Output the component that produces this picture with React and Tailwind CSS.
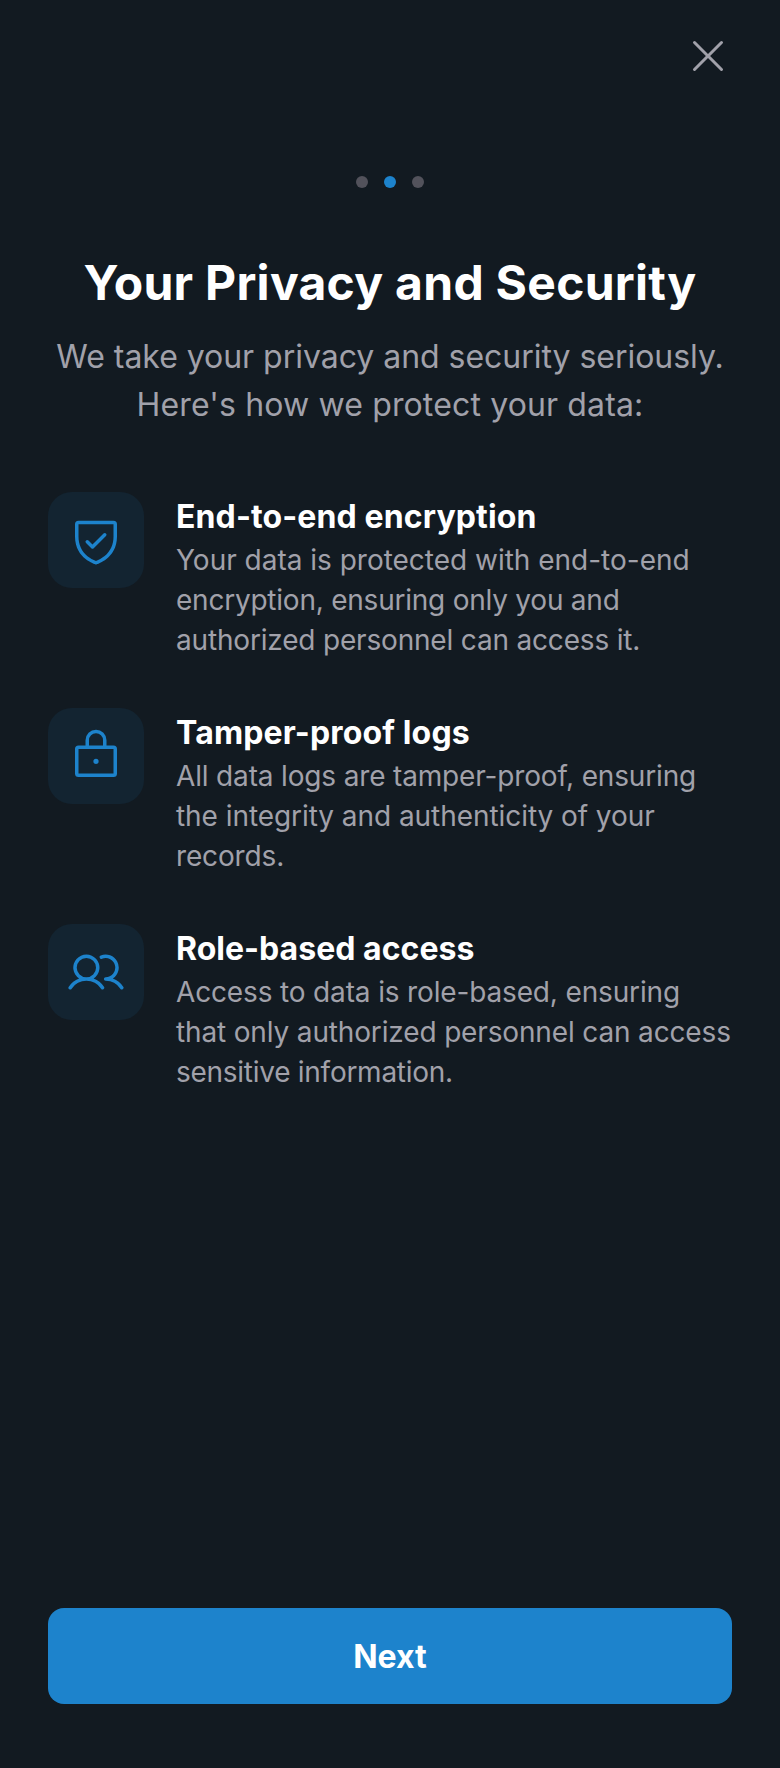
import React from 'react';
import { PiShieldCheck, PiLock, PiUsers, PiX } from 'react-icons/pi';

const items = [
  {
    Icon: PiShieldCheck,
    title: 'End-to-end encryption',
    tracking: 'tracking-[0.12px]',
    lines: [
      { text: 'Your data is protected with end-to-end', tracking: 'tracking-[-0.01px]' },
      { text: 'encryption, ensuring only you and', tracking: 'tracking-[-0.23px]' },
      { text: 'authorized personnel can access it.', tracking: 'tracking-[-0.18px]' },
    ],
  },
  {
    Icon: PiLock,
    title: 'Tamper-proof logs',
    tracking: 'tracking-[0.15px]',
    lines: [
      { text: 'All data logs are tamper-proof, ensuring', tracking: 'tracking-[-0.16px]' },
      { text: 'the integrity and authenticity of your', tracking: 'tracking-[-0.06px]' },
      { text: 'records.', tracking: 'tracking-[-0.15px]' },
    ],
  },
  {
    Icon: PiUsers,
    title: 'Role-based access',
    tracking: 'tracking-[0.03px]',
    lines: [
      { text: 'Access to data is role-based, ensuring', tracking: 'tracking-[-0.15px]' },
      { text: 'that only authorized personnel can access', tracking: 'tracking-[-0.15px]' },
      { text: 'sensitive information.', tracking: 'tracking-[-0.27px]' },
    ],
  },
];

function Feature({ Icon, title, tracking, lines }) {
  return (
    <li className="flex gap-8">
      <div className="flex size-24 shrink-0 items-center justify-center rounded-3xl bg-[#132431] text-[#1d83cc]">
        <Icon size={56} />
      </div>
      <div>
        <h2 className={`h-12 pt-px text-[32px] leading-[48px] font-bold text-white ${tracking}`}>{title}</h2>
        <p className="text-[28px] leading-[40px] whitespace-nowrap text-[#a1a1aa]">
          {lines.map((line) => (
            <span key={line.text} className={`block ${line.tracking}`}>{line.text}</span>
          ))}
        </p>
      </div>
    </li>
  );
}

export default function App() {
  return (
    <main className="flex h-[1768px] w-[780px] flex-col bg-[#121a21] px-12 pb-16 font-['Inter',sans-serif]">
      <div className="flex h-28 items-center justify-end">
        <button aria-label="Close" className="text-[#a1a1aa]"><PiX size={48} /></button>
      </div>
      <div className="mt-16 flex justify-center gap-4">
        <span className="size-3 rounded-full bg-[#52525b]" />
        <span className="size-3 rounded-full bg-[#1d83cc]" />
        <span className="size-3 rounded-full bg-[#52525b]" />
      </div>
      <h1 className="mt-[65px] text-center text-[48px] leading-[60px] font-bold tracking-[0.28px] text-white">
        Your Privacy and Security
      </h1>
      <p className="mt-5 text-center text-[32px] leading-[48px] text-[#a1a1aa]">
        <span className="block tracking-[-0.03px]">We take your privacy and security seriously.</span>
        <span className="block tracking-[0.14px]">Here's how we protect your data:</span>
      </p>
      <ul className="mt-[63px] flex flex-col gap-12">
        {items.map((item) => <Feature key={item.title} {...item} />)}
      </ul>
      <button className="mt-auto h-24 w-full rounded-2xl bg-[#1d83cc] pt-0.5 text-[32px] font-bold text-white">Next</button>
    </main>
  );
}
